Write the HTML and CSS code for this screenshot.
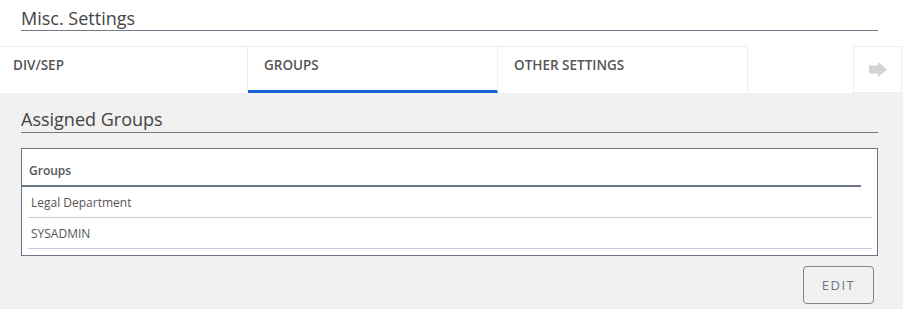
FILE: index.html
```html
<!DOCTYPE html>
<html lang="en">
<head>
    <meta charset="UTF-8">
    <meta name="viewport" content="width=device-width, initial-scale=1.0">
    <title>Misc. Settings</title>
    <link rel="stylesheet" href="styles.css">
</head>
<body>

    <div class="section-head">
        <h2 class="section-title">Misc. Settings</h2>
    </div>

    <div class="tabbar">
        <ul class="tabs">
            <li class="tab">DIV/SEP</li>
            <li class="tab active">GROUPS</li>
            <li class="tab">OTHER SETTINGS</li>
        </ul>
        <button class="tab-next" type="button" aria-label="Next">
            <svg width="18" height="15" viewBox="0 0 18 15">
                <polygon points="0,3.5 9,3.5 9,0 18,7.5 9,15 9,11.5 0,11.5" fill="#d3d3d3"/>
            </svg>
        </button>
    </div>

    <div class="panel">
        <h3 class="panel-title">Assigned Groups</h3>
        <div class="grid">
            <div class="grid-head">Groups</div>
            <ul class="grid-rows">
                <li>Legal Department</li>
                <li>SYSADMIN</li>
            </ul>
        </div>
        <div class="actions">
            <button class="btn-edit" type="button">EDIT</button>
        </div>
    </div>

</body>
</html>
```

FILE: styles.css
```css
body {
    font-family: "Open Sans", "Liberation Sans", sans-serif;
    margin: 0;
    padding: 0;
    background-color: #fff;
    color: #555;
}
.section-head {
    margin: 0 25px 0 21px;
    padding-top: 7px;
}
.section-title,
.panel-title {
    margin: 0;
    font-size: 18px;
    font-weight: 400;
    line-height: 23px;
    color: #444;
    border-bottom: 1px solid #6d7a89;
}
.panel-title {
    padding-bottom: 1px;
}
.tabbar {
    display: flex;
    justify-content: space-between;
    margin-top: 15px;
}
.tabs {
    display: flex;
    list-style: none;
    margin: 0 0 0 -2px;
    padding: 0;
}
.tab {
    width: 250px;
    box-sizing: border-box;
    padding: 9px 16px 16px;
    font-size: 13.5px;
    font-weight: 600;
    line-height: 18px;
    color: #555;
    background-color: #fff;
    border-top: 1px solid #eee;
    border-right: 1px solid #eee;
    border-bottom: 3px solid #fff;
}
.tab:first-child {
    padding-left: 15px;
}
.tab.active {
    border-bottom-color: #1a64d2;
}
.tab-next {
    width: 49px;
    height: 47px;
    box-sizing: border-box;
    margin-right: 1px;
    padding: 0;
    display: flex;
    justify-content: center;
    align-items: center;
    background-color: #fff;
    border: 1px solid #eee;
    cursor: pointer;
}
.panel {
    background-color: #f0f1f0;
    padding: 15px 25px 10px 21px;
}
.grid {
    margin-top: 15px;
    background-color: #fff;
    border: 1px solid #6b7482;
}
.grid-head {
    margin-right: 16px;
    padding: 14px 7px 6px;
    font-size: 12px;
    font-weight: 600;
    line-height: 16px;
    color: #555;
    border-bottom: 2px solid #6b7482;
}
.grid-rows {
    list-style: none;
    margin: 0;
    padding: 0 5px 6px 6px;
}
.grid-rows li {
    padding: 8px 3px 6px;
    font-size: 12px;
    line-height: 16px;
    color: #555;
    border-bottom: 1px solid #c6cbd2;
}
.actions {
    display: flex;
    justify-content: flex-end;
    margin-top: 10px;
    padding-right: 4px;
}
.btn-edit {
    width: 71px;
    height: 38px;
    padding: 0;
    font-family: "Open Sans", "Liberation Sans", sans-serif;
    font-size: 13px;
    letter-spacing: 1.5px;
    color: #6f7885;
    background-color: transparent;
    border: 1px solid #7b8590;
    border-radius: 4px;
    cursor: pointer;
}
```
